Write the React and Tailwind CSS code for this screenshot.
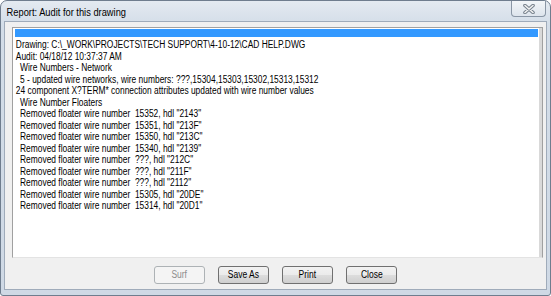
export default function App() {
  const lines = [
    ["Drawing: C:\\_WORK\\PROJECTS\\TECH SUPPORT\\4-10-12\\CAD HELP.DWG", false],
    ["Audit: 04/18/12 10:37:37 AM", false],
    ["Wire Numbers - Network", true],
    ["5 - updated wire networks, wire numbers: ???,15304,15303,15302,15313,15312", true],
    ["24 component X?TERM* connection attributes updated with wire number values", false],
    ["Wire Number Floaters", true],
    ['Removed floater wire number  15352, hdl "2143"', true],
    ['Removed floater wire number  15351, hdl "213F"', true],
    ['Removed floater wire number  15350, hdl "213C"', true],
    ['Removed floater wire number  15340, hdl "2139"', true],
    ['Removed floater wire number  ???, hdl "212C"', true],
    ['Removed floater wire number  ???, hdl "211F"', true],
    ['Removed floater wire number  ???, hdl "2112"', true],
    ['Removed floater wire number  15305, hdl "20DE"', true],
    ['Removed floater wire number  15314, hdl "20D1"', true],
  ];
  const btn =
    "w-[51px] h-[18px] flex items-center justify-center rounded-[3px] border text-[10px] leading-none";
  const raised =
    " border-[#707070] bg-[linear-gradient(to_bottom,#f2f2f2,#ebebeb_50%,#dddddd_50%,#cfcfcf)]";
  return (
    <div className="w-[551px] h-[296px] flex flex-col rounded-t-[7px] rounded-b-[3px] border border-[#6f7d8e] bg-[linear-gradient(to_bottom,#e4eaf1,#d3dde8_24px,#cfd9e5)] font-['Liberation_Sans',sans-serif] text-black">
      <div className="h-[20px] flex justify-between items-start">
        <div className="pl-[6px] pt-[6px] text-[10px] leading-[12px] whitespace-nowrap origin-left scale-x-[0.93]">Report: Audit for this drawing</div>
        <div className="mr-[4px] w-[35px] h-[16px] rounded-b-[4px] border border-t-0 border-[#8a96a5] bg-[linear-gradient(to_bottom,#f3f6f9,#dde4ec)] flex items-center justify-center">
          <svg width="12" height="10" viewBox="0 0 12 10">
            <path d="M2 1.5 L10 8.5 M10 1.5 L2 8.5" stroke="#76808c" strokeWidth="3.6" strokeLinecap="round" />
            <path d="M2 1.5 L10 8.5 M10 1.5 L2 8.5" stroke="#f2f2f2" strokeWidth="1.6" strokeLinecap="round" />
          </svg>
        </div>
      </div>
      <div className="mx-[3px] h-[269px] border border-[#9fabba] bg-[#f0f0f0] flex flex-col">
        <div className="mt-[5px] ml-[7px] mr-[3px] h-[231px] border border-[#a0a0a0] border-b-[#e3e3e3] bg-white flex">
          <div className="flex-1 pl-[2px] pt-[1px] flex flex-col">
            <div className="h-[8px] bg-[#3399ff]"></div>
            <div className="mt-[2px] pl-[1px] text-[10px] leading-[11.5px] whitespace-pre origin-left scale-x-[0.84]">
              {lines.map(([t, ind], i) => (
                <div key={i} className={ind ? "pl-[5px]" : ""}>{t}</div>
              ))}
            </div>
          </div>
          <div className="w-[1px] bg-white"></div>
          <div className="w-[3px] bg-[#d9d9d9]"></div>
        </div>
        <div className="mt-[8px] h-[18px] flex justify-center gap-[13px]">
          <div className={btn + " border-[#adb2b5] bg-[#f4f4f4] text-[#8d8d8d]"}><span className="scale-x-[0.85]">Surf</span></div>
          <div className={btn + raised}><span className="scale-x-[0.85]">Save As</span></div>
          <div className={btn + raised}><span className="scale-x-[0.85]">Print</span></div>
          <div className={btn + raised}><span className="scale-x-[0.85]">Close</span></div>
        </div>
      </div>
    </div>
  );
}
